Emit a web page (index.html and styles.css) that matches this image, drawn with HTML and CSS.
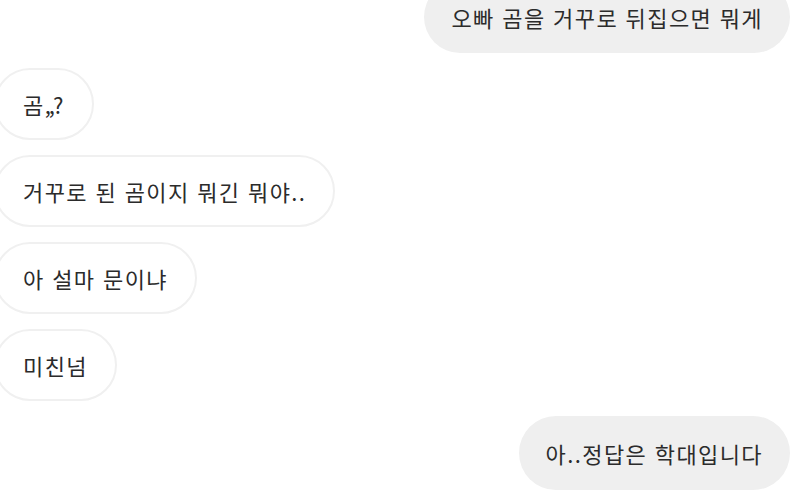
FILE: index.html
```html
<!DOCTYPE html>
<html lang="ko">
<head>
  <meta charset="UTF-8">
  <meta name="viewport" content="width=device-width, initial-scale=1.0">
  <title>대화</title>
  <link rel="stylesheet" href="styles.css">
</head>
<body>
  <div class="chat">
    <div class="msg me">오빠 곰을 거꾸로 뒤집으면 뭐게</div>
    <div class="msg you">곰<span class="tight">,,</span>?</div>
    <div class="msg you">거꾸로 된 곰이지 뭐긴 뭐야..</div>
    <div class="msg you">아 설마 문이냐</div>
    <div class="msg you">미친넘</div>
    <div class="msg me">아..정답은 학대입니다</div>
  </div>
</body>
</html>
```

FILE: styles.css
```css
body {
  margin: 0;
  padding: 0;
  background-color: #ffffff;
  color: #2b2b2b;
  font-family: 'Noto Sans CJK KR', 'Noto Sans', sans-serif;
  overflow: hidden;
}

.chat {
  display: flex;
  flex-direction: column;
  gap: 15px;
  margin-top: -19px;
  padding: 0 10px 0 0;
}

.msg {
  box-sizing: border-box;
  height: 72px;
  display: flex;
  align-items: center;
  padding: 0 27px;
  border-radius: 36px;
  font-size: 22px;
  letter-spacing: 1.4px;
  white-space: nowrap;
}

.tight {
  letter-spacing: -2px;
}

.me {
  align-self: flex-end;
  background-color: #efefef;
}

.you {
  align-self: flex-start;
  margin-left: -6px;
  background-color: #ffffff;
  border: 2px solid #f0f0f0;
}

.msg:last-child {
  height: 74px;
  border-radius: 37px;
}
```
